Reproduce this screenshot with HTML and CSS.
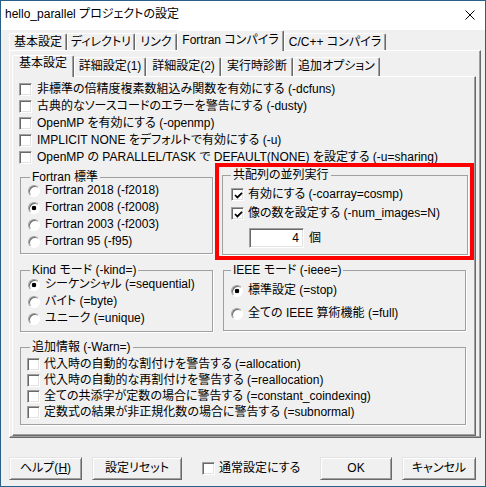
FILE: index.html
```html
<!DOCTYPE html>
<html lang="ja">
<head>
<meta charset="utf-8">
<title>hello_parallel プロジェクトの設定</title>
<link rel="stylesheet" href="styles.css">
</head>
<body>
<div class="window">
  <div class="titlebar">
    <span class="title">hello_parallel プロジェクトの設定</span>
    <svg class="close" width="10" height="10" viewBox="0 0 10 10"><path d="M0.5 0.5 L9.5 9.5 M9.5 0.5 L0.5 9.5" stroke="#000" stroke-width="1" fill="none"/></svg>
  </div>
  <div class="client">
    <div class="tabrow outer-tabs">
      <div class="tab o1">基本設定</div>
      <div class="tab o2">ディレクトリ</div>
      <div class="tab o3">リンク</div>
      <div class="tab o4 sel">Fortran コンパイラ</div>
      <div class="tab o5">C/C++ コンパイラ</div>
    </div>
    <div class="panel outer-panel">
      <div class="tabrow inner-tabs">
        <div class="tab i1 sel">基本設定</div>
        <div class="tab i2">詳細設定(1)</div>
        <div class="tab i3">詳細設定(2)</div>
        <div class="tab i4">実行時診断</div>
        <div class="tab i5">追加オプション</div>
      </div>
      <div class="panel inner-panel">
        <div class="checklist">
          <div class="row"><span class="cb"></span><span class="lbl">非標準の倍精度複素数組込み関数を有効にする (-dcfuns)</span></div>
          <div class="row"><span class="cb"></span><span class="lbl">古典的なソースコードのエラーを警告にする (-dusty)</span></div>
          <div class="row"><span class="cb"></span><span class="lbl">OpenMP を有効にする (-openmp)</span></div>
          <div class="row"><span class="cb"></span><span class="lbl">IMPLICIT NONE をデフォルトで有効にする (-u)</span></div>
          <div class="row"><span class="cb"></span><span class="lbl">OpenMP の PARALLEL/TASK で DEFAULT(NONE) を設定する (-u=sharing)</span></div>
        </div>
        <div class="groups">
          <fieldset class="grp fortran">
            <legend>Fortran 標準</legend>
            <div class="row"><span class="rb"></span><span class="lbl">Fortran 2018 (-f2018)</span></div>
            <div class="row"><span class="rb on"></span><span class="lbl">Fortran 2008 (-f2008)</span></div>
            <div class="row"><span class="rb"></span><span class="lbl">Fortran 2003 (-f2003)</span></div>
            <div class="row"><span class="rb"></span><span class="lbl">Fortran 95 (-f95)</span></div>
          </fieldset>
          <fieldset class="grp coarray">
            <legend>共配列の並列実行</legend>
            <div class="row"><span class="cb"><svg class="tick" width="9" height="9" viewBox="0 0 9 9"><path d="M1 4 L3.4 6.5 L8 1.8" stroke="#000" stroke-width="1.8" fill="none"/></svg></span><span class="lbl">有効にする (-coarray=cosmp)</span></div>
            <div class="row"><span class="cb"><svg class="tick" width="9" height="9" viewBox="0 0 9 9"><path d="M1 4 L3.4 6.5 L8 1.8" stroke="#000" stroke-width="1.8" fill="none"/></svg></span><span class="lbl">像の数を設定する (-num_images=N)</span></div>
            <div class="images"><span class="field">4</span><span class="unit">個</span></div>
          </fieldset>
          <fieldset class="grp kind">
            <legend>Kind モード (-kind=)</legend>
            <div class="row"><span class="rb on"></span><span class="lbl">シーケンシャル (=sequential)</span></div>
            <div class="row"><span class="rb"></span><span class="lbl">バイト (=byte)</span></div>
            <div class="row"><span class="rb"></span><span class="lbl">ユニーク (=unique)</span></div>
          </fieldset>
          <fieldset class="grp ieee">
            <legend>IEEE モード (-ieee=)</legend>
            <div class="row"><span class="rb on"></span><span class="lbl">標準設定 (=stop)</span></div>
            <div class="row"><span class="rb"></span><span class="lbl">全ての IEEE 算術機能 (=full)</span></div>
          </fieldset>
        </div>
        <fieldset class="grp warn">
          <legend>追加情報 (-Warn=)</legend>
          <div class="row"><span class="cb"></span><span class="lbl">代入時の自動的な割付けを警告する (=allocation)</span></div>
          <div class="row"><span class="cb"></span><span class="lbl">代入時の自動的な再割付けを警告する (=reallocation)</span></div>
          <div class="row"><span class="cb"></span><span class="lbl">全ての共添字が定数の場合に警告する (=constant_coindexing)</span></div>
          <div class="row"><span class="cb"></span><span class="lbl">定数式の結果が非正規化数の場合に警告する (=subnormal)</span></div>
        </fieldset>
      </div>
    </div>
    <div class="buttons">
      <div class="btn help">ヘルプ(<u>H</u>)</div>
      <div class="btn reset">設定リセット</div>
      <div class="row normal"><span class="cb"></span><span class="lbl">通常設定にする</span></div>
      <div class="btn ok">OK</div>
      <div class="btn cancel">キャンセル</div>
    </div>
  </div>
  <div class="highlight"></div>
</div>
</body>
</html>
```
FILE: styles.css
```css
* { box-sizing: border-box; }
html, body { margin: 0; padding: 0; }
body {
  width: 486px;
  height: 487px;
  overflow: hidden;
  background: #f0f0f0;
  color: #000;
  font: 12px/17px "Liberation Sans", "Noto Sans CJK JP", sans-serif;
  font-feature-settings: "palt";
}
.window {
  position: relative;
  width: 486px;
  height: 487px;
  border: 1px solid #2a5f8a;
  background: #f0f0f0;
}
.titlebar {
  height: 29px;
  background: #fff;
  display: flex;
  justify-content: space-between;
  align-items: flex-start;
}
.title { margin: 5px 0 0 4px; line-height: 17px; white-space: nowrap; }
.close { margin: 9px 10px 0 0; display: block; }
.client { padding: 0 4px 0 8px; }

/* tabs */
.tabrow { display: flex; align-items: flex-end; }
.outer-tabs { height: 20px; }
.inner-tabs { height: 21px; }
.tab {
  border: 1px solid #fff;
  border-right-color: #696969;
  border-bottom: 0;
  border-radius: 2px 2px 0 0;
  box-shadow: inset -1px 0 #a0a0a0;
  background: #f0f0f0;
  text-align: center;
  white-space: nowrap;
}
.outer-tabs .tab { height: 17px; line-height: 16px; }
.outer-tabs .tab.sel { height: 21px; line-height: 18px; margin-bottom: -1px; position: relative; }
.inner-tabs .tab { height: 19px; line-height: 16px; }
.inner-tabs .tab.sel { height: 22px; line-height: 15px; margin-bottom: -1px; position: relative; }
.o1 { width: 58px; }
.o2 { width: 68px; }
.o3 { width: 42px; }
.o4 { width: 107px; }
.o5 { width: 102px; }
.i1 { width: 62px; }
.i2 { width: 72px; }
.i3 { width: 75px; }
.i4 { width: 72px; }
.i5 { width: 87px; }

/* panels */
.panel {
  border: 1px solid #fff;
  border-right-color: #696969;
  border-bottom-color: #696969;
  box-shadow: inset -1px -1px #a0a0a0;
}
.outer-panel { width: 472px; height: 388px; padding: 4px 0 0 2px; }
.inner-panel { width: 464px; height: 360px; padding: 4px 0 0 7px; }

/* rows and controls */
.row { display: flex; align-items: center; height: 17px; white-space: nowrap; }
.checklist { margin-left: -1px; }
.checklist .lbl { margin-left: 5px; }
.lbl { margin-left: 4px; }
.cb {
  flex: none;
  width: 13px;
  height: 13px;
  background: #fff;
  border: 1px solid;
  border-color: #a0a0a0 #fff #fff #a0a0a0;
  box-shadow: inset 1px 1px #696969, inset -1px -1px #e3e3e3;
  display: flex;
  align-items: center;
  justify-content: center;
}
.tick { display: block; margin: 1px 0 0 1px; }
.rb {
  flex: none;
  width: 12px;
  height: 12px;
  border-radius: 50%;
  background: #fff;
  border: 1px solid;
  border-color: #a0a0a0 #fff #fff #a0a0a0;
  box-shadow: inset 1px 1px #696969;
}
.rb.on { background: radial-gradient(circle at 50% 50%, #000 0 2px, #fff 2.6px); }
.rb + .lbl { margin-left: 5px; }

/* group boxes */
.grp {
  margin: 0;
  min-width: 0;
  border: 1px solid #a0a0a0;
  box-shadow: 1px 1px 0 #fff;
}
.grp legend { line-height: 9px; padding: 0 2px; white-space: nowrap; }
.groups {
  display: grid;
  grid-template-columns: 193px 246px;
  column-gap: 9px;
  row-gap: 11px;
  align-items: start;
  margin-top: 7px;
}
.fortran { padding: 0 0 3px 7px; }
.fortran legend { margin-left: 2px; }
.coarray { padding: 5px 0 6px 8px; margin-top: -2px; }
.coarray .row { height: 19px; }
.coarray legend { margin-left: 0; }
.images { display: flex; align-items: center; margin: 5px 0 0 18px; }
.field {
  width: 55px;
  height: 20px;
  background: #fff;
  border: 1px solid;
  border-color: #a0a0a0 #fff #fff #a0a0a0;
  box-shadow: inset 1px 1px #696969, inset -1px -1px #e3e3e3;
  text-align: right;
  padding-right: 4px;
  line-height: 18px;
}
.unit { margin-left: 5px; }
.kind { padding: 1px 0 4px 7px; }
.kind legend { margin-left: 2px; }
.ieee { width: 243px; margin-left: 1px; padding: 4px 0 5px 7px; }
.ieee .row { height: 23px; }
.ieee legend { margin-left: 0; }
.warn { width: 446px; margin-top: 11px; padding: 4px 0 4px 6px; }
.warn .row { height: 16px; }
.warn legend { margin-left: 3px; }

/* buttons */
.buttons {
  display: flex;
  align-items: center;
  height: 23px;
  margin-top: 19px;
  padding-right: 5px;
}
.btn {
  height: 23px;
  border: 1px solid;
  border-color: #e3e3e3 #696969 #696969 #e3e3e3;
  box-shadow: inset 1px 1px #fff, inset -1px -1px #a0a0a0;
  text-align: center;
  line-height: 20px;
  white-space: nowrap;
}
.help { width: 73px; }
.reset { width: 90px; margin-left: 10px; }
.normal { margin-left: 20px; }
.ok { width: 72px; margin-left: auto; }
.cancel { width: 74px; margin-left: 10px; }

/* annotation overlay */
.highlight {
  position: absolute;
  left: 214px;
  top: 162px;
  width: 259px;
  height: 97px;
  border: 4px solid #ff0000;
  pointer-events: none;
}
```
